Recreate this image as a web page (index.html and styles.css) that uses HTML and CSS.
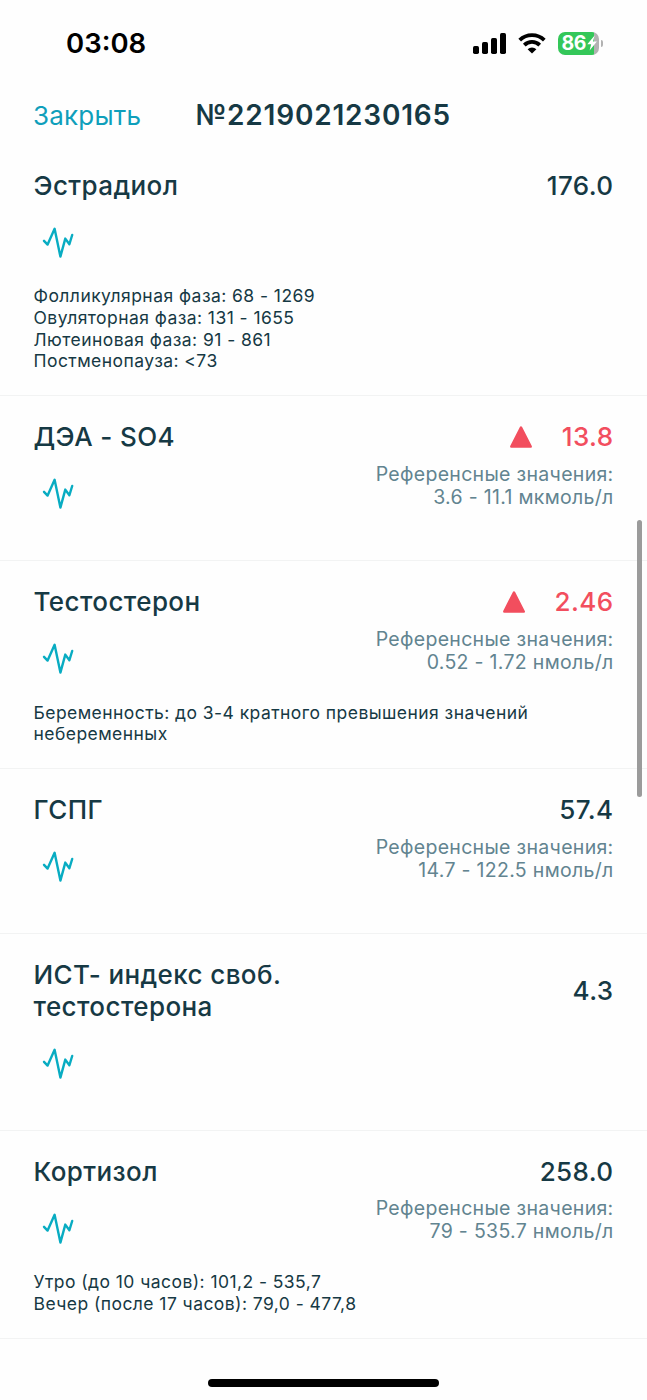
FILE: index.html
```html
<!DOCTYPE html>
<html lang="ru">
  <head>
    <meta charset="UTF-8" />
    <meta name="viewport" content="width=device-width, initial-scale=1.0" />
    <title>Результаты анализов</title>
    <link rel="stylesheet" href="styles.css">
  </head>
  <body>
    <svg class="sprite" aria-hidden="true">
      <symbol id="pulse" viewBox="0 0 32 32">
        <path d="M2 13.8 L5.6 17.6 L12.6 1.8 L18.4 29.6 L23.3 11.6 L27.4 17.2 L30.2 8" />
      </symbol>
      <symbol id="triangle" viewBox="0 0 24 24">
        <path d="M12 2.5 L21.7 21.6 H2.3 Z" />
      </symbol>
    </svg>

    <div class="status-bar">
      <span class="time">03:08</span>
      <div class="status-icons">
        <svg class="signal" viewBox="0 0 33 21">
          <rect x="0" y="13" width="6" height="8" rx="1.7" />
          <rect x="9" y="9" width="6" height="12" rx="1.7" />
          <rect x="18" y="5" width="6" height="16" rx="1.7" />
          <rect x="27" y="0" width="6" height="21" rx="1.7" />
        </svg>
        <svg class="wifi" viewBox="0 0 28 21">
          <path class="arc" d="M1.7 7.2 A17.6 17.6 0 0 1 26.3 7.2" />
          <path class="arc" d="M6.3 12.1 A11 11 0 0 1 21.7 12.1" />
          <path d="M14 20.6 L9.6 16.2 A6.3 6.3 0 0 1 18.4 16.2 Z" />
        </svg>
        <div class="battery">
          <div class="battery-body">
            <span>86</span>
            <svg class="bolt" viewBox="0 0 10 16">
              <path d="M7.6 0.5 L0.3 9.2 H4.2 L2.6 15.5 L9.9 6.6 H6 Z" />
            </svg>
          </div>
          <div class="battery-cap"></div>
        </div>
      </div>
    </div>

    <header class="header">
      <a class="close">Закрыть</a>
      <h1>№2219021230165</h1>
    </header>

    <main class="results">
      <section class="result">
        <div class="result-head">
          <h2>Эстрадиол</h2>
          <div class="value">176.0</div>
        </div>
        <div class="result-body">
          <svg class="pulse"><use href="#pulse" /></svg>
        </div>
        <p class="note">Фолликулярная фаза: 68 - 1269<br>Овуляторная фаза: 131 - 1655<br>Лютеиновая фаза: 91 - 861<br>Постменопауза: &lt;73</p>
      </section>

      <section class="result">
        <div class="result-head">
          <h2>ДЭА - SO4</h2>
          <div class="value high"><svg class="triangle"><use href="#triangle" /></svg>13.8</div>
        </div>
        <div class="result-body">
          <svg class="pulse"><use href="#pulse" /></svg>
          <p class="reference">Референсные значения:<br>3.6 - 11.1 мкмоль/л</p>
        </div>
      </section>

      <section class="result">
        <div class="result-head">
          <h2>Тестостерон</h2>
          <div class="value high"><svg class="triangle"><use href="#triangle" /></svg>2.46</div>
        </div>
        <div class="result-body">
          <svg class="pulse"><use href="#pulse" /></svg>
          <p class="reference">Референсные значения:<br>0.52 - 1.72 нмоль/л</p>
        </div>
        <p class="note">Беременность: до 3-4 кратного превышения значений<br>небеременных</p>
      </section>

      <section class="result">
        <div class="result-head">
          <h2>ГСПГ</h2>
          <div class="value">57.4</div>
        </div>
        <div class="result-body">
          <svg class="pulse"><use href="#pulse" /></svg>
          <p class="reference">Референсные значения:<br>14.7 - 122.5 нмоль/л</p>
        </div>
      </section>

      <section class="result">
        <div class="result-head">
          <h2>ИСТ- индекс своб.<br>тестостерона</h2>
          <div class="value">4.3</div>
        </div>
        <div class="result-body">
          <svg class="pulse"><use href="#pulse" /></svg>
        </div>
      </section>

      <section class="result">
        <div class="result-head">
          <h2>Кортизол</h2>
          <div class="value">258.0</div>
        </div>
        <div class="result-body">
          <svg class="pulse"><use href="#pulse" /></svg>
          <p class="reference">Референсные значения:<br>79 - 535.7 нмоль/л</p>
        </div>
        <p class="note">Утро (до 10 часов): 101,2 - 535,7<br>Вечер (после 17 часов): 79,0 - 477,8</p>
      </section>
    </main>

    <div class="scrollbar"></div>
    <div class="home-indicator"></div>
  </body>
</html>
```
FILE: styles.css
```css
* {
  box-sizing: border-box;
}
body {
  position: relative;
  height: 1400px;
  margin: 0;
  overflow: hidden;
  background-color: #fefefe;
  color: #163944;
  font-family: Inter, "Liberation Sans", sans-serif;
}
h1,
h2,
p {
  margin: 0;
}
.sprite {
  position: absolute;
  width: 0;
  height: 0;
}

/* Status bar */
.status-bar {
  display: flex;
  justify-content: space-between;
  align-items: center;
  height: 86px;
  padding: 0 44px 0 66px;
  color: #000;
}
.time {
  font-size: 27.5px;
  font-weight: 600;
}
.status-icons {
  display: flex;
  align-items: center;
}
.signal {
  width: 33px;
  height: 21px;
  margin-right: 12px;
}
.wifi {
  width: 28px;
  height: 21px;
  margin-right: 12px;
}
.wifi .arc {
  fill: none;
  stroke: #000;
  stroke-width: 3.8;
}
.battery {
  display: flex;
  align-items: center;
  gap: 2px;
}
.battery-body {
  display: flex;
  align-items: center;
  width: 41px;
  height: 23px;
  padding-left: 3.5px;
  border-radius: 7px;
  background: linear-gradient(to right, #34c759 36px, #b2b2b2 36px);
  color: #fff;
  font-size: 19.5px;
  font-weight: 700;
  letter-spacing: -0.5px;
}
.bolt {
  flex-shrink: 0;
  width: 10px;
  height: 16px;
  margin-left: 1px;
  fill: #fff;
}
.battery-cap {
  width: 2px;
  height: 7px;
  border-radius: 0 3px 3px 0;
  background-color: #b2b2b2;
}

/* Header */
.header {
  display: flex;
  align-items: center;
  height: 58.6px;
  padding-left: 33px;
}
.close {
  width: 162.5px;
  color: #0f9fbb;
  font-size: 26px;
  letter-spacing: 0.2px;
}
.header h1 {
  font-size: 28px;
  font-weight: 600;
  letter-spacing: 0.8px;
}

/* Results list */
.result {
  padding: 25px 33.5px 23.3px 33.5px;
  border-bottom: 1px solid #f2f3f3;
}
.result-head {
  display: flex;
  justify-content: space-between;
  align-items: center;
}
.result-head h2,
.value {
  font-size: 26px;
  font-weight: 500;
  line-height: 32px;
  letter-spacing: 0.4px;
}
.value {
  display: flex;
  align-items: center;
}
.value.high {
  color: #f24e5e;
}
.triangle {
  width: 24px;
  height: 24px;
  margin-right: 29px;
  fill: #f24e5e;
  stroke: #f24e5e;
  stroke-width: 2.5;
  stroke-linejoin: round;
}
.result-body {
  display: flex;
  justify-content: space-between;
  align-items: flex-start;
  height: 83.5px;
}
.pulse {
  width: 32px;
  height: 32px;
  margin: 25px 0 0 8.5px;
  fill: none;
  stroke: #08acc2;
  stroke-width: 2.4;
  stroke-linecap: round;
  stroke-linejoin: round;
}
.reference {
  margin-top: 9.5px;
  color: #628490;
  font-size: 19.5px;
  line-height: 23px;
  letter-spacing: 0.3px;
  text-align: right;
}
.note {
  font-size: 17.5px;
  line-height: 21.7px;
  letter-spacing: 0.44px;
}

.scrollbar {
  position: absolute;
  top: 520px;
  right: 5px;
  width: 5px;
  height: 277px;
  border-radius: 3px;
  background-color: #9b9b9b;
}
.home-indicator {
  position: absolute;
  bottom: 13px;
  left: 208px;
  width: 231px;
  height: 8px;
  border-radius: 4px;
  background-color: #000;
}
```
